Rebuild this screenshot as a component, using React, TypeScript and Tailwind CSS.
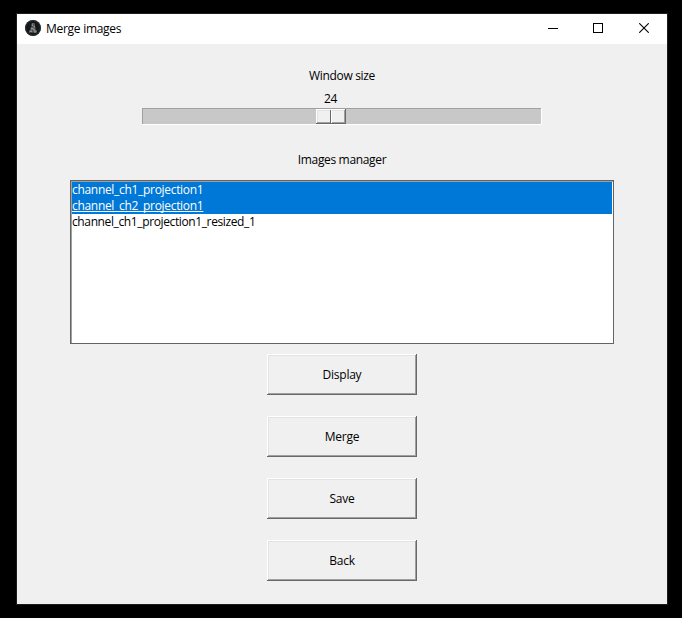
import React from "react";

const raised =
  "bg-[#f0f0f0] shadow-[inset_-1px_-1px_0_#696969,inset_1px_1px_0_#ffffff,inset_-2px_-2px_0_#a0a0a0,inset_2px_2px_0_#e3e3e3]";

function AppIcon() {
  return (
    <svg className="mb-[2px]" width="16" height="16" viewBox="0 0 16 16">
      <circle cx="8" cy="8" r="8" fill="#15181b" />
      <circle cx="8" cy="8" r="7.3" fill="none" stroke="#303437" strokeWidth=".8" />
      <path d="M7 3h2.2l.8 1.6-.4 1.6.8 1.2v2l1.6 1.4v1.8H4v-1.6l1.6-1.4V7.6l1-1.2-.2-1.8z" fill="#686868" />
      <path d="M7 5h1M9 6.4h1M6 8.6h2M8 10h2M5.4 11.4h1.4M9 12h2" stroke="#a8a8a8" strokeWidth=".9" />
      <path d="M8.2 4.2h1M6.4 7h1.4M7 10.8h1.4" stroke="#282828" strokeWidth=".9" />
      <path d="M8 5.6h1" stroke="#9c4848" strokeWidth="1" />
    </svg>
  );
}

function TitleBar() {
  return (
    <header className="flex h-[30px] items-center bg-white pl-2">
      <AppIcon />
      <h1 className="ml-[5px] grow tracking-[-0.28px]">Merge images</h1>
      <div className="flex">
        <button className="flex h-[30px] w-[45px] items-center justify-center" aria-label="Minimize">
          <svg width="10" height="10" shapeRendering="crispEdges">
            <path d="M0 4h10v1H0z" />
          </svg>
        </button>
        <button className="flex h-[30px] w-[46px] items-center justify-center" aria-label="Maximize">
          <svg className="mb-[2px]" width="10" height="10" shapeRendering="crispEdges">
            <path d="M.5.5h9v9h-9z" fill="none" stroke="#000" />
          </svg>
        </button>
        <button className="flex h-[30px] w-[46px] items-center justify-center" aria-label="Close">
          <svg className="mb-[2px]" width="10" height="10">
            <path d="M.2.2l9.6 9.6M9.8.2L.2 9.8" fill="none" stroke="#000" strokeWidth="1.1" />
          </svg>
        </button>
      </div>
    </header>
  );
}

function SizeSlider() {
  return (
    <div className="h-[17px] w-[400px] bg-[#c8c8c8] pl-[174px] pt-px shadow-[inset_-1px_-1px_0_#ffffff,inset_1px_1px_0_#a0a0a0]">
      <div className={`h-[15px] w-[30px] pl-[14px] pt-px ${raised}`}>
        <div className="h-[13px] w-[2px] border-l border-r border-l-[#696969] border-r-white" />
      </div>
    </div>
  );
}

function ImageList() {
  return (
    <ul className="h-[164px] w-[544px] bg-white p-[2px] leading-4 shadow-[inset_0_0_0_1px_#646464,inset_2px_2px_0_#a0a0a0]">
      <li className="h-4 bg-[#0078d7] tracking-[-0.31px] text-white">channel_ch1_projection1</li>
      <li className="h-4 bg-[#0078d7] tracking-[-0.31px] text-white underline decoration-1 underline-offset-1 [text-decoration-skip-ink:none]">
        channel_ch2_projection1
      </li>
      <li className="h-4 tracking-[-0.38px]">channel_ch1_projection1_resized_1</li>
    </ul>
  );
}

export default function App() {
  return (
    <main className="h-[618px] w-[682px] bg-black pl-4 pt-[13px] font-['Open_Sans','Noto_Sans',sans-serif] text-[12px] leading-4 text-black">
      <section className="h-[592px] w-[652px] border border-[#1c1c1c] bg-[#f0f0f0]">
        <TitleBar />
        <div className="flex flex-col items-center">
          <p className="mt-6 h-4 tracking-[-0.32px]">Window size</p>
          <div className="mt-[7px] flex w-[400px] flex-col">
            <span className="ml-[182px] h-[17px] tracking-[-0.4px]">24</span>
            <SizeSlider />
          </div>
          <p className="mt-[27px] h-4 tracking-[-0.34px]">Images manager</p>
          <div className="mt-3">
            <ImageList />
          </div>
          <div className="mt-[10px] flex flex-col gap-[21px]">
            {["Display", "Merge", "Save", "Back"].map((label) => (
              <button key={label} className={`h-[41px] w-[150px] tracking-[-0.25px] ${raised}`}>
                {label}
              </button>
            ))}
          </div>
        </div>
      </section>
    </main>
  );
}
